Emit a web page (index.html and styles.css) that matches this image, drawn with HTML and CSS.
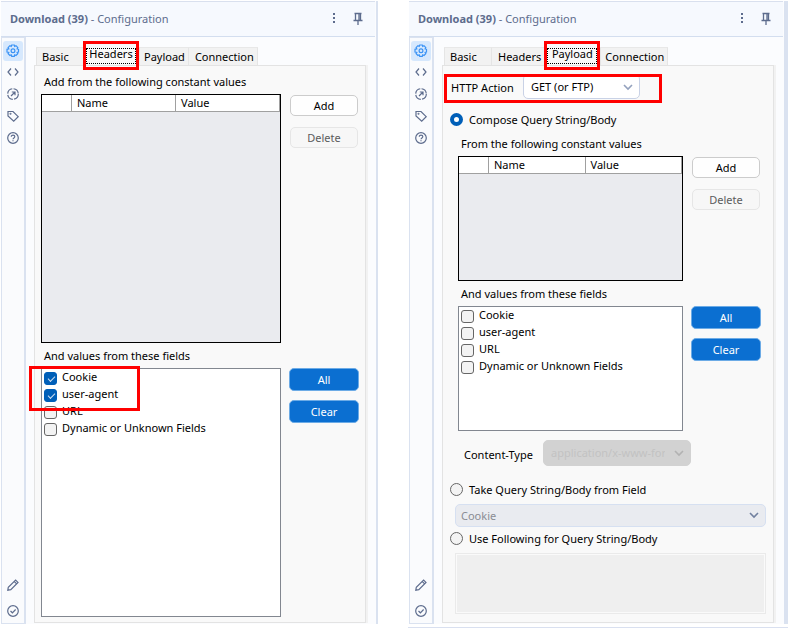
FILE: index.html
```
<!DOCTYPE html>
<html lang="en">
<head>
    <meta charset="UTF-8">
    <meta name="viewport" content="width=device-width, initial-scale=1.0">
    <title>Download (39) - Configuration</title>
    <link rel="stylesheet" href="styles.css">
</head>
<body>
    <!-- Shared icons -->
    <svg class="sprite" aria-hidden="true">
        <symbol id="i-gear" viewBox="0 0 14 14">
            <path d="M5.7 1h2.6l.4 1.4 1.3-.7 1.8 1.8-.7 1.3 1.4.5v2.7l-1.4.4.7 1.3-1.8 1.8-1.3-.7-.4 1.5H5.7l-.5-1.5-1.3.7-1.8-1.8.7-1.3L1 8V5.300l1.800-.500-.7-1.300 1.800-1.800 1.300.7z"/>
            <circle cx="7" cy="6.700" r="1.900"/>
        </symbol>
        <symbol id="i-code" viewBox="0 0 14 14"><path d="M5 3.500 2 7l3 3.500M9 3.500 12 7l-3 3.500"/></symbol>
        <symbol id="i-target" viewBox="0 0 14 14">
            <circle cx="7" cy="7" r="5.300" stroke-dasharray="7 1.300"/>
            <path d="M5 9l4-4M5.800 5H9v3.200"/>
        </symbol>
        <symbol id="i-tag" viewBox="0 0 14 14">
            <path d="M2 2.500h5l5.200 5.200-4.500 4.500L2 7z"/>
            <circle cx="4.500" cy="4.800" r=".4"/>
        </symbol>
        <symbol id="i-help" viewBox="0 0 14 14">
            <circle cx="7" cy="7" r="5.300"/>
            <path d="M5.300 5.700c0-2.300 3.500-2.100 3.500-.1C8.800 7 7 6.900 7 8.300M7 9.300v1"/>
        </symbol>
        <symbol id="i-pencil" viewBox="0 0 14 14"><path d="M1.800 12.200l.5-3L9.600 2l2.400 2.400-7.200 7.300zM8.200 3.400l2.400 2.400"/></symbol>
        <symbol id="i-check" viewBox="0 0 14 14">
            <circle cx="7" cy="7" r="5.300"/>
            <path d="M4.500 7l1.900 1.800 3.200-3.300"/>
        </symbol>
        <symbol id="i-dots" viewBox="0 0 14 14"><path d="M7 1v2M7 5v2M7 9v2" stroke-width="2"/></symbol>
        <symbol id="i-pin" viewBox="0 0 14 14"><path d="M3.500 1.500h7M4.500 1.500V8M9.500 1.500V8M8 2v6M2.500 8.500h9M7 9v4"/></symbol>
        <symbol id="i-chevron" viewBox="0 0 10 10"><path d="M1 3l4 4 4-4"/></symbol>
    </svg>

    <main class="workspace">
        <!-- Headers tab -->
        <section class="panel">
            <header class="panel-header">
                <h1 class="panel-title"><b>Download (39)</b> - Configuration</h1>
                <button class="icon-btn" aria-label="More"><svg><use href="#i-dots"/></svg></button>
                <button class="icon-btn" aria-label="Pin"><svg><use href="#i-pin"/></svg></button>
            </header>
            <div class="panel-body">
                <nav class="toolbar">
                    <button class="tool selected" aria-label="Configuration"><svg><use href="#i-gear"/></svg></button>
                    <button class="tool" aria-label="XML view"><svg><use href="#i-code"/></svg></button>
                    <button class="tool" aria-label="Navigation"><svg><use href="#i-target"/></svg></button>
                    <button class="tool" aria-label="Annotation"><svg><use href="#i-tag"/></svg></button>
                    <button class="tool" aria-label="Help"><svg><use href="#i-help"/></svg></button>
                    <button class="tool tool-edit" aria-label="Edit"><svg><use href="#i-pencil"/></svg></button>
                    <button class="tool" aria-label="Apply"><svg><use href="#i-check"/></svg></button>
                </nav>
                <div class="content">
                    <div class="tabs" role="tablist">
                        <button class="tab" role="tab">Basic</button>
                        <button class="tab active" role="tab" aria-selected="true">Headers</button>
                        <button class="tab" role="tab">Payload</button>
                        <button class="tab tab-last" role="tab">Connection</button>
                    </div>
                    <div class="page">
                        <p class="caption">Add from the following constant values</p>
                        <div class="group grow">
                            <div class="grid-box">
                                <table class="grid">
                                    <thead><tr><th class="row-head"></th><th>Name</th><th>Value</th></tr></thead>
                                </table>
                            </div>
                            <div class="actions">
                                <button class="btn">Add</button>
                                <button class="btn" disabled>Delete</button>
                            </div>
                        </div>
                        <p class="caption caption-next">And values from these fields</p>
                        <div class="group grow">
                            <div class="list">
                                <label class="item"><input type="checkbox" checked>Cookie</label>
                                <label class="item"><input type="checkbox" checked>user-agent</label>
                                <label class="item"><input type="checkbox">URL</label>
                                <label class="item"><input type="checkbox">Dynamic or Unknown Fields</label>
                                <span class="mark mark-list"></span>
                            </div>
                            <div class="actions">
                                <button class="btn primary">All</button>
                                <button class="btn primary">Clear</button>
                            </div>
                        </div>
                    </div>
                </div>
            </div>
        </section>

        <!-- Payload tab -->
        <section class="panel panel-right">
            <header class="panel-header">
                <h1 class="panel-title"><b>Download (39)</b> - Configuration</h1>
                <button class="icon-btn" aria-label="More"><svg><use href="#i-dots"/></svg></button>
                <button class="icon-btn" aria-label="Pin"><svg><use href="#i-pin"/></svg></button>
            </header>
            <div class="panel-body">
                <nav class="toolbar">
                    <button class="tool selected" aria-label="Configuration"><svg><use href="#i-gear"/></svg></button>
                    <button class="tool" aria-label="XML view"><svg><use href="#i-code"/></svg></button>
                    <button class="tool" aria-label="Navigation"><svg><use href="#i-target"/></svg></button>
                    <button class="tool" aria-label="Annotation"><svg><use href="#i-tag"/></svg></button>
                    <button class="tool" aria-label="Help"><svg><use href="#i-help"/></svg></button>
                    <button class="tool tool-edit" aria-label="Edit"><svg><use href="#i-pencil"/></svg></button>
                    <button class="tool" aria-label="Apply"><svg><use href="#i-check"/></svg></button>
                </nav>
                <div class="content">
                    <div class="tabs" role="tablist">
                        <button class="tab" role="tab">Basic</button>
                        <button class="tab" role="tab">Headers</button>
                        <button class="tab active" role="tab" aria-selected="true">Payload</button>
                        <button class="tab tab-last" role="tab">Connection</button>
                    </div>
                    <div class="page">
                        <div class="field field-action">
                            <label for="action">HTTP Action</label>
                            <div class="select">
                                <select id="action"><option>GET (or FTP)</option></select>
                                <svg><use href="#i-chevron"/></svg>
                            </div>
                            <span class="mark mark-action"></span>
                        </div>
                        <label class="choice choice-first"><input type="radio" name="body" checked>Compose Query String/Body</label>
                        <div class="compose">
                            <p class="caption">From the following constant values</p>
                            <div class="group">
                                <div class="grid-box">
                                    <table class="grid">
                                        <thead><tr><th class="row-head"></th><th>Name</th><th>Value</th></tr></thead>
                                    </table>
                                </div>
                                <div class="actions">
                                    <button class="btn">Add</button>
                                    <button class="btn" disabled>Delete</button>
                                </div>
                            </div>
                            <p class="caption caption-next">And values from these fields</p>
                            <div class="group">
                                <div class="list">
                                    <label class="item"><input type="checkbox">Cookie</label>
                                    <label class="item"><input type="checkbox">user-agent</label>
                                    <label class="item"><input type="checkbox">URL</label>
                                    <label class="item"><input type="checkbox">Dynamic or Unknown Fields</label>
                                </div>
                                <div class="actions">
                                    <button class="btn primary">All</button>
                                    <button class="btn primary">Clear</button>
                                </div>
                            </div>
                            <div class="field field-type">
                                <label for="ctype">Content-Type</label>
                                <div class="select off">
                                    <select id="ctype" disabled><option>application/x-www-form-urlencoded</option></select>
                                    <svg><use href="#i-chevron"/></svg>
                                </div>
                            </div>
                        </div>
                        <label class="choice choice-field"><input type="radio" name="body">Take Query String/Body from Field</label>
                        <div class="select source">
                            <select aria-label="Field" disabled><option>Cookie</option></select>
                            <svg><use href="#i-chevron"/></svg>
                        </div>
                        <label class="choice choice-text"><input type="radio" name="body">Use Following for Query String/Body</label>
                        <textarea class="body-text" aria-label="Query String/Body" disabled></textarea>
                    </div>
                </div>
            </div>
        </section>
    </main>
</body>
</html>
```
FILE: styles.css
```
* {
    margin: 0;
    padding: 0;
    box-sizing: border-box;
}

body {
    font-family: 'Noto Sans', 'Open Sans', sans-serif;
    font-size: 11px;
    line-height: 17px;
    color: #000;
    background: #fff;
}

button,
select,
textarea {
    font: inherit;
    color: inherit;
    background: none;
    border: none;
}

svg {
    display: block;
    width: 14px;
    height: 14px;
    fill: none;
    stroke: currentColor;
    stroke-width: 1.2;
}

.sprite {
    position: absolute;
    width: 0;
    height: 0;
}

.workspace {
    display: grid;
    grid-template-columns: 377fr 379fr;
    column-gap: 31px;
    min-height: 100vh;
    padding: 1px 0 4px 1px;
}

/* Panels */
.panel {
    position: relative;
    display: flex;
    flex-direction: column;
    min-width: 0;
    background: #fbfcfe;
    border-right: 2px solid #dae2f0;
}

.panel-right {
    border-right-width: 4px;
}

.panel-right::after {
    content: '';
    position: absolute;
    left: -1px;
    right: -4px;
    bottom: -4px;
    height: 1px;
    background: #d9e0f0;
}

.panel-header {
    display: flex;
    align-items: center;
    gap: 10px;
    height: 36px;
    margin-right: 1px;
    padding: 0 10px 0 9px;
    background: #f6f9fe;
    border-top: 1px solid #d9e0ee;
    border-bottom: 1px solid #d3deef;
    color: #5d6c8d;
}

.panel-title {
    flex: 1;
    padding-bottom: 2px;
    font-size: 11px;
    font-weight: 400;
    white-space: nowrap;
}

.icon-btn svg {
    stroke-width: 1.3;
}

.panel-body {
    flex: 1;
    display: flex;
}

/* Side toolbar */
.toolbar {
    display: flex;
    flex-direction: column;
    width: 25px;
    padding: 3px 1px 1px;
    border: 1px solid #dae2f0;
    border-right-width: 2px;
    background: #fafbfd;
    color: #5d6c8d;
}

.tool {
    display: flex;
    align-items: center;
    justify-content: center;
    height: 22px;
    border-radius: 3px;
}

.tool.selected {
    height: 20px;
    background: #d6e8fd;
    color: #3b93f5;
}

.tool-edit {
    margin-top: auto;
    margin-bottom: 4px;
}

/* Tabs */
.content {
    flex: 1;
    display: flex;
    flex-direction: column;
    min-width: 0;
    padding: 4px 10px 1px 8px;
}

.tabs {
    display: flex;
    align-items: flex-end;
    height: 24px;
    padding-left: 2px;
}

.tab {
    height: 18px;
    padding: 0 3px 0 6px;
    background: #f2f2f2;
    border-top: 1px solid #e8e8e8;
    border-left: 1px solid #e5e5e5;
    white-space: nowrap;
}

.tab:first-child {
    min-width: 47px;
    padding-left: 5px;
    text-align: left;
}

.tab.active + .tab {
    padding-left: 4px;
}

.tab.active {
    position: relative;
    width: 56px;
    height: 21px;
    padding: 0 0 2px;
    background: #f9f9f9;
    border: none;
}

/* Focus rectangle */
.tab.active::before {
    content: '';
    position: absolute;
    inset: 4px 3px 1px;
    border: 1px dotted #000;
}

/* Red callouts */
.tab.active::after,
.mark {
    content: '';
    position: absolute;
    border: 3px solid #f00;
    pointer-events: none;
}

.tab.active::after {
    inset: -3px 0 -5px;
}

.mark-list {
    top: -3px;
    left: -13px;
    width: 111px;
    height: 45px;
    z-index: 1;
}

.mark-action {
    top: 0;
    left: -5px;
    width: 218px;
    height: 29px;
}

.tab-last {
    border-right: 1px solid #e5e5e5;
}

.page {
    flex: 1;
    display: flex;
    flex-direction: column;
    padding: 8px 6px 5px;
    background: #f9f9f9;
    border: 1px solid #e3e3e3;
    box-shadow: 2px 0 #f2f2f2;
}

/* Field groups */
.caption {
    padding-left: 3px;
    padding-bottom: 5px;
    line-height: 15px;
}

.caption-next {
    margin-top: 5px;
}

.group {
    display: flex;
    gap: 8px;
}

.grow {
    flex: 1;
}

.compose .group {
    height: 125px;
}

.grid-box {
    flex: 1;
    border: 1px solid #000;
    background: #eaebef;
}

.grid {
    width: 100%;
    table-layout: fixed;
    border-spacing: 0;
}

.grid th {
    height: 17px;
    line-height: 16px;
    padding-left: 5px;
    background: #fff;
    border-right: 1px solid #a0a0a0;
    border-bottom: 1px solid #a0a0a0;
    font-weight: 400;
    text-align: left;
}

.grid .row-head {
    width: 30px;
}

.list {
    position: relative;
    flex: 1;
    padding: 0 2px;
    background: #fff;
    border: 1px solid #828790;
}

.item {
    display: flex;
    gap: 5px;
    height: 17px;
    line-height: 15px;
}

.item input {
    appearance: none;
    width: 13px;
    height: 13px;
    margin-top: 3px;
    border: 1px solid #666;
    border-radius: 3px;
    background: #f3f3f3;
}

.item input:checked {
    border-color: #005fb8;
    background: #005fb8;
}

.item input:checked::after {
    content: '';
    display: block;
    width: 6px;
    height: 3px;
    margin: 3px 0 0 3px;
    border: solid #cfe0f2;
    border-width: 0 0 1px 1px;
    transform: rotate(-45deg);
}

/* Buttons */
.actions {
    display: flex;
    flex-direction: column;
    gap: 9px;
    width: 70px;
}

.btn {
    height: 23px;
    border: 1px solid #ccc;
    border-radius: 5px;
    background: #fefefe;
    background-clip: padding-box;
}

.btn:not(.primary) {
    height: 21px;
    margin: 1px 1px 0;
}

.btn:not(.primary):disabled {
    margin-top: 2px;
    background: #f7f7f7;
    border-color: #e6e6e6;
    color: #5c5c5c;
}

.btn.primary {
    padding-bottom: 1px;
    background: #0b6fd1;
    border-color: #6cabe6;
    color: #fff;
}

/* Drop-downs */
.field {
    display: flex;
    align-items: center;
}

.field-action {
    position: relative;
    padding-left: 2px;
}

.field-action label {
    width: 72px;
    padding-top: 2px;
}

.field-type {
    margin-top: 9px;
    padding-left: 6px;
}

.field-type label {
    width: 79px;
    padding-top: 3px;
}

.select {
    position: relative;
    width: 117px;
    height: 25px;
}

.select select {
    appearance: none;
    width: 100%;
    height: 100%;
    padding: 0 20px 1px 7px;
    border: 1px solid #c9d2e6;
    border-radius: 5px;
    background: #fff;
    opacity: 1;
}

.select svg {
    position: absolute;
    top: 8px;
    right: 7px;
    width: 10px;
    height: 10px;
    color: #93a1bd;
    stroke-width: 1.6;
    pointer-events: none;
}

.select.off {
    width: 148px;
    height: 26px;
}

.select.off select {
    padding-right: 25px;
    background: #d2d2d2;
    border-color: #d2d2d2;
    color: #c2c2c2;
}

.select.off svg {
    color: #b2b2b2;
}

.select.source {
    width: auto;
    height: 23px;
    margin: 6px 1px 0 6px;
}

.select.source select {
    padding: 0 20px 0 5px;
    background: #e9ebf0;
    border-color: #d6e0f1;
    color: #8a8d94;
}

.select.source svg {
    top: 6px;
    color: #71809f;
}

/* Payload source */
.choice {
    display: flex;
    align-items: center;
    gap: 6px;
    padding-left: 1px;
}

.choice input {
    appearance: none;
    width: 13px;
    height: 13px;
    border: 1px solid #666;
    border-radius: 50%;
    background: #f3f3f3;
}

.choice input:checked {
    border: 4px solid #005fb8;
    background: #fff;
}

.choice-first {
    margin-top: 12px;
}

.choice-field {
    margin-top: 15px;
}

.choice-text {
    margin-top: 3px;
}

.compose {
    margin: 8px 6px 0 9px;
}

.body-text {
    flex: 1;
    margin: 6px 1px 3px 6px;
    resize: none;
    background: #efefef;
    border: 1px solid #eaeaea;
    box-shadow: inset 0 0 0 1px #fafafa;
}
```
